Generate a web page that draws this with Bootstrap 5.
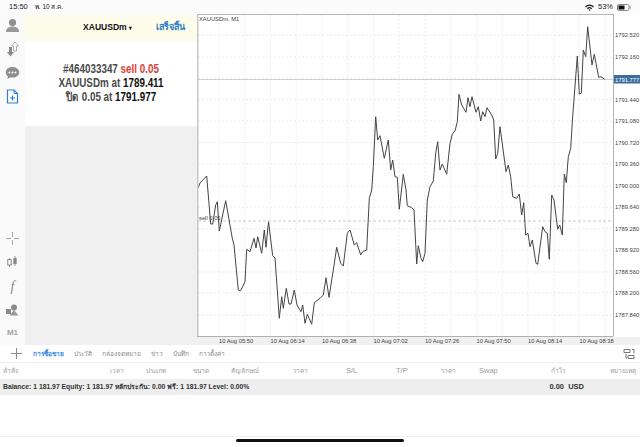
<!DOCTYPE html>
<html lang="th">
<head>
    <meta charset="UTF-8">
    <meta name="viewport" content="width=device-width, initial-scale=1.0">
    <title>XAUUSDm</title>
    <link href="https://cdn.jsdelivr.net/npm/bootstrap@5.3.0/dist/css/bootstrap.min.css" rel="stylesheet">
    <style>
        html, body { width: 640px; height: 447px; overflow: hidden; }
        body { font-family: "Liberation Sans", "Noto Sans", sans-serif; background: #fff; color: #222; font-size: 8px; }
        .status-top { height: 14px; padding: 0 9px 0 9px; font-size: 7.5px; color: #222; background: #fbfbfb; }
        .status-date { margin-left: 7px; font-size: 6.5px; }
        .main-area { height: 331px; }
        .side-tools { width: 25px; background: #fafafa; }
        .side-tool { height: 23.5px; }
        .side-tools-low { margin-top: auto; }
        .side-tools-low .side-tool { height: 23.6px; }
        .tool-f { font-family: "Liberation Serif", serif; font-size: 14px; color: #8a8a8a; }
        .m1-label { font-size: 8px; font-weight: 700; color: #a4a4a4; }
        .order-panel { width: 172px; background: #f0f0f0; }
        .order-head { height: 27px; background: #fdfbea; padding: 0 12px 0 0; }
        .order-symbol { font-weight: 700; font-size: 9.5px; color: #111; margin-left: 58px; transform: scaleX(.9); transform-origin: left; }
        .order-caret { font-size: 6px; }
        .order-done { font-size: 9px; color: #2f7fc4; margin-left: auto; font-weight: 700; }
        .order-body { height: 85px; background: #fff; font-size: 12px; line-height: 14px; font-weight: 700; color: #4a4a4a; padding-top: 21px; }
        .order-line { transform: scaleX(.82); white-space: nowrap; }
        .order-body b { color: #111; }
        .order-sell { color: #d9423a; }
        .chart-box { width: 443px; }
        .chart-box svg { display: block; }
        .tab-strip { height: 17px; background: #fff; font-size: 6.5px; color: #8a8a8a; }
        .tab-plus { width: 33px; }
        .tab-item { margin-right: 10px; }
        .tab-on { color: #2c86e0; font-weight: 700; }
        .tab-right { margin-left: auto; margin-right: 5px; line-height: 0; }
        .col-heads { height: 17px; display: grid; grid-template-columns: 107px 36px 47px 38px 62px 53px 50px 45px 38px 72px 59px 27px; border-top: 1px solid #eee; padding-left: 3px; color: #9a9a9a; font-size: 6.5px; align-items: center; }
        .col-swap { font-size: 7.5px; }
        .balance-row { height: 16px; background: #eeeeee; padding: 0 0 0 3px; font-size: 6.8px; font-weight: 700; color: #333; }
        .balance-total { margin-left: auto; margin-right: 56px; font-size: 7.5px; }
        .bottom-space { height: 42px; position: relative; border-bottom: 1px solid #efefef; }
        .home-bar { position: absolute; left: 236px; top: 44px; width: 168px; height: 3px; background: #111; border-radius: 2px; }
        .px-txt { font-family: "Liberation Sans", sans-serif; font-size: 5.8px; fill: #444; }
        .price-tag { fill: #fff; }
    </style>
</head>
<body>
    <div class="status-top d-flex align-items-center">
        <span>15:50</span><span class="status-date">พ. 10 ส.ค.</span>
        <span class="ms-auto d-flex align-items-center gap-1">
            <svg width="9" height="7" viewBox="0 0 9 7"><path d="M0 2.4a6.4 6.4 0 0 1 9 0L8 3.4a5 5 0 0 0-7 0zM1.8 4.2a3.9 3.9 0 0 1 5.4 0L6.2 5.2a2.4 2.4 0 0 0-3.4 0zM3.4 5.8a1.5 1.5 0 0 1 2.2 0L4.5 7z" fill="#222"/></svg>
            <span>53%</span>
            <svg width="14" height="7" viewBox="0 0 14 7"><rect x=".5" y=".5" width="11.5" height="6" rx="1.5" fill="none" stroke="#888"/><rect x="1.5" y="1.5" width="6" height="4" fill="#111"/><rect x="12.6" y="2.3" width="1" height="2.4" fill="#888"/></svg>
        </span>
    </div>

    <div class="main-area d-flex">
        <div class="side-tools d-flex flex-column">
            <div class="side-tool d-flex justify-content-center align-items-center">
                <svg width="15" height="15" viewBox="0 0 15 15"><circle cx="7.5" cy="4.5" r="3.6" fill="#8f8f8f"/><path d="M1 14c0-4 3-5.5 6.5-5.5S14 10 14 14z" fill="#9a9a9a"/></svg>
            </div>
            <div class="side-tool d-flex justify-content-center align-items-center">
                <svg width="15" height="16" viewBox="0 0 15 16"><path d="M4 6h3v5h2l-3.5 4.5L2 11h2z" fill="#8a8a8a"/><path d="M10 1l3.5 4H11.5v5h-3V5H6.500z" fill="#fff" stroke="#9a9a9a" stroke-width=".8"/></svg>
            </div>
            <div class="side-tool d-flex justify-content-center align-items-center">
                <svg width="15" height="14" viewBox="0 0 15 14"><path d="M7.5 1C3.5 1 .8 3.4.8 6.4c0 1.6.8 3 2.2 4L2.4 13l3.2-1.7c.6.1 1.2.2 1.9.2 4 0 6.7-2.3 6.7-5.1S11.500 1 7.500 1z" fill="#8f8f8f"/><circle cx="4.500" cy="6.400" r="1" fill="#fff"/><circle cx="7.500" cy="6.400" r="1" fill="#fff"/><circle cx="10.500" cy="6.400" r="1" fill="#fff"/></svg>
            </div>
            <div class="side-tool d-flex justify-content-center align-items-center">
                <svg width="13" height="15" viewBox="0 0 13 15"><path d="M1.500 1h6.500l3.500 3.500V14h-10z" fill="#fff" stroke="#2a7fd4" stroke-width="1.200"/><path d="M8 1v3.500h3.500" fill="none" stroke="#2a7fd4"/><path d="M6.500 6.500v5M4 9h5" stroke="#2a7fd4" stroke-width="1.200"/></svg>
            </div>
            <div class="side-tools-low">
                <div class="side-tool d-flex justify-content-center align-items-center">
                    <svg width="13" height="13" viewBox="0 0 13 13"><path d="M6.500 0v5M6.500 8v5M0 6.500h5M8 6.500h5" stroke="#a8a8a8"/></svg>
                </div>
                <div class="side-tool d-flex justify-content-center align-items-center">
                    <svg width="11" height="12" viewBox="0 0 11 12"><path d="M2.500 2v9M8 0v10" stroke="#999"/><rect x=".8" y="3.500" width="3.400" height="5.500" fill="#fff" stroke="#8a8a8a"/><rect x="6.300" y="2" width="3.400" height="6" fill="#8a8a8a"/></svg>
                </div>
                <div class="side-tool d-flex justify-content-center align-items-center">
                    <i class="tool-f">f</i>
                </div>
                <div class="side-tool d-flex justify-content-center align-items-center">
                    <svg width="13" height="12" viewBox="0 0 13 12"><rect x="0" y="5" width="5" height="5" fill="#8a8a8a"/><circle cx="8" cy="3.500" r="3" fill="#8a8a8a"/><path d="M8 6l4.500 5.500h-9z" fill="#999"/></svg>
                </div>
                <div class="side-tool d-flex justify-content-center align-items-center m1-label">M1</div>
            </div>
        </div>

        <div class="order-panel">
            <div class="order-head d-flex align-items-center">
                <span class="order-symbol">XAUUSDm <span class="order-caret">▾</span></span>
                <span class="order-done">เสร็จสิ้น</span>
            </div>
            <div class="order-body text-center">
                <div class="order-line">#464033347 <span class="order-sell">sell 0.05</span></div>
                <div class="order-line">XAUUSDm at <b>1789.411</b></div>
                <div class="order-line">ปิด 0.05 at <b>1791.977</b></div>
            </div>
        </div>

        <div class="chart-box">
            <svg id="chart" width="443" height="331" viewBox="197 14 443 331"></svg>
        </div>
    </div>

    <div class="tab-strip d-flex align-items-center">
        <div class="tab-plus d-flex justify-content-center">
            <svg width="13" height="13" viewBox="0 0 13 13"><path d="M6.500 1v11M1 6.500h11" stroke="#8a8a8a"/></svg>
        </div>
        <span class="tab-item tab-on">การซื้อขาย</span>
        <span class="tab-item">ประวัติ</span>
        <span class="tab-item">กล่องจดหมาย</span>
        <span class="tab-item">ข่าว</span>
        <span class="tab-item">บันทึก</span>
        <span class="tab-item">การตั้งค่า</span>
        <span class="tab-right">
            <svg width="12" height="12" viewBox="0 0 12 12"><path d="M1 1.500h6v3H1zM5 7.500h6v3H5zM9 1.500h2v4M3 6v4h1" fill="none" stroke="#777"/></svg>
        </span>
    </div>

    <div class="col-heads">
        <span>คำสั่ง</span><span>เวลา</span><span>ประเภท</span><span>ขนาด</span><span>สัญลักษณ์</span><span>ราคา</span>
        <span class="col-swap">S/L</span><span class="col-swap">T/P</span><span>ราคา</span><span class="col-swap">Swap</span><span>กำไร</span><span>หมายเหตุ</span>
    </div>

    <div class="balance-row d-flex align-items-center">
        <span>Balance: 1 181.97 Equity: 1 181.97 หลักประกัน: 0.00 ฟรี: 1 181.97 Level: 0.00%</span>
        <span class="balance-total">0.00&nbsp; USD</span>
    </div>

    <div class="bottom-space"><div class="home-bar"></div></div>

    <script>
        // chart drawn from data, coordinates are page pixels
        const ns = "http://www.w3.org/2000/svg";
        const svg = document.getElementById("chart");
        function add(tag, attrs, text) {
            const el = document.createElementNS(ns, tag);
            for (const k in attrs) el.setAttribute(k, attrs[k]);
            if (text) el.textContent = text;
            svg.appendChild(el);
            return el;
        }
        const L = 198, R = 613, T = 14.5, B = 336;
        add("rect", { x: 197, y: 14, width: 443, height: 331, fill: "#f0f0f0" });
        add("rect", { x: 197, y: 14, width: 443, height: 323, fill: "#fff" });

        const prices = [["1792.520", 35], ["1792.160", 57], ["1791.440", 99.5], ["1791.080", 121], ["1790.720", 142.5],
            ["1790.360", 164], ["1790.000", 186], ["1789.640", 207], ["1789.280", 229], ["1788.920", 250],
            ["1788.560", 272], ["1788.200", 293], ["1787.840", 315]];
        const gridLine = { stroke: "#e6e6e6", "stroke-width": 0.8, "stroke-dasharray": "2 2" };
        prices.forEach(p => {
            add("line", { x1: L, x2: R, y1: p[1], y2: p[1], ...gridLine });
            add("text", { x: 615, y: p[1] + 2.2, class: "px-txt" }, p[0]);
        });
        add("line", { x1: L, x2: R, y1: 78, y2: 78, ...gridLine });
        const times = ["05:50", "06:14", "06:38", "07:02", "07:26", "07:50", "08:14", "08:38"];
        for (let i = 0; i < 16; i++) {
            const x = 219 + i * 25.75;
            if (x < R) add("line", { x1: x, x2: x, y1: T, y2: B, ...gridLine });
        }
        times.forEach((t, i) => {
            const x = 219 + i * 51.5;
            add("text", { x: x, y: 342.5, class: "px-txt" }, "10 Aug " + t);
        });

        // sell level and current price
        add("line", { x1: L, x2: R, y1: 221, y2: 221, stroke: "#bdbdbd", "stroke-width": 0.8, "stroke-dasharray": "3 2" });
        add("text", { x: 199, y: 220, class: "px-txt" }, "sell 0.05");
        add("line", { x1: L, x2: R, y1: 79.5, y2: 79.5, stroke: "#c9d0d6", "stroke-width": 1.2 });

        const pts = [198,188, 200,183, 206.7,176, 210.7,224, 212.7,224, 215.7,205, 217.3,201.7, 219.3,231, 225.7,200.7,
            232.300,238.300, 234,245, 238.300,290, 240.700,290.700, 245,281.700, 246.700,249.300, 250,251.700, 254,238.300,
            256,248, 257.700,236.700, 261.700,253.300, 264.300,230, 266,247.300, 268.500,221.700, 272.700,255.700, 275,258,
            279.300,318.300, 281.700,296.700, 283.300,308.300, 286.300,288.300, 289,304, 291,304, 294.300,290, 297,305,
            301,311.700, 302.700,305, 305,323.300, 307.300,314.300, 311.700,324.300, 314.300,302.700, 320,298.300, 323.300,295,
            326,277.700, 329,297.300, 333.300,270, 336.700,247.300, 340.700,263.300, 343.300,266, 347.300,233.300, 350,230,
            354.300,245, 356.700,242.700, 360.700,255, 362.700,251.700, 366.700,250, 369.300,198.300, 371.700,190, 373.300,166.700,
            375.700,116.700, 377.700,140, 380,135.700, 384.300,158.300, 388.300,140, 390.700,170, 392.700,160, 395,176.700,
            397.300,177.300, 399.300,209.300, 403.300,174.300, 406,190, 407.300,205.700, 411.700,207.700, 414,210, 416.700,264,
            418.300,245.700, 421,258.300, 422.700,261.700, 425,253.300, 427.300,200, 430,186.700, 433.300,181, 435.700,153.300,
            437.700,141.700, 440,170, 442.300,164, 446.700,174.300, 450,143.300, 452.300,134.300, 455.300,130, 457.300,121.700,
            459,94.300, 461.700,105, 466,112.300, 468,97.700, 470,106.700, 472,96.700, 476,112.300, 478.300,106.700, 480.700,121,
            482.700,111.700, 485,116.700, 487,107.700, 491.700,115, 493.700,120, 495.700,159, 497.700,153.300, 500,126.700,
            506,171.700, 508.300,165, 510.700,176.700, 512.700,196.700, 516.700,198.300, 519.300,194, 521.700,215, 523.700,202.700,
            525.700,235, 528,233.300, 530,246.700, 532.300,240, 536,263.300, 537.700,264.300, 542.700,226.700, 545,231.700,
            547.300,233.300, 549.300,259.300, 551.700,195, 554,200, 557.700,229.300, 559.700,225, 562.300,235, 564.300,174,
            566.300,182.700, 568.300,156.700, 570.700,148.300, 572.500,119, 577.300,56, 579.300,94, 581.300,93.300, 583.300,50,
            585.700,56.700, 587.700,26.700, 592,65, 594.300,54.300, 598.700,77.300, 601,76.700, 604.700,79.300];
        add("polyline", { points: pts.join(" "), fill: "none", stroke: "#444", "stroke-width": 1, "stroke-linejoin": "round" });

        // frame
        add("rect", { x: 197, y: 14, width: 1.5, height: 322, fill: "#c8c8c8" });
        add("line", { x1: 197, x2: 613.5, y1: 14.5, y2: 14.5, stroke: "#b5b5b5" });
        add("line", { x1: 613.500, x2: 613.500, y1: 14, y2: 336, stroke: "#b0b0b0" });
        add("line", { x1: 197, x2: 613.500, y1: 336.500, y2: 336.500, stroke: "#b0b0b0" });
        add("text", { x: 199, y: 20.500, class: "px-txt" }, "XAUUSDm, M1");

        add("rect", { x: 614, y: 75, width: 26, height: 8.500, fill: "#3d6c9e" });
        add("text", { x: 615, y: 81.500, class: "px-txt price-tag" }, "1791.777");
    </script>
    <script src="https://cdn.jsdelivr.net/npm/bootstrap@5.3.0/dist/js/bootstrap.bundle.min.js"></script>
</body>
</html>
